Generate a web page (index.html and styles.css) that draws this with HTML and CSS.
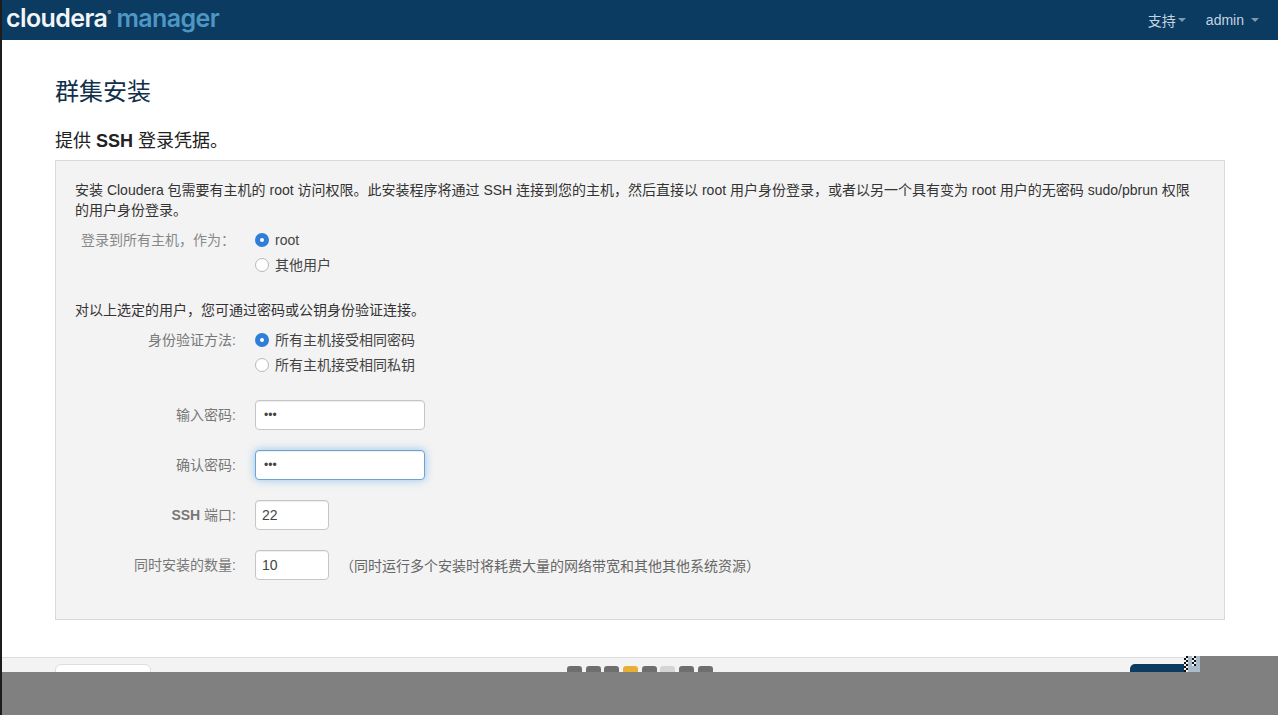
FILE: index.html
```html
<!DOCTYPE html>
<html lang="zh-CN">
<head>
  <meta charset="UTF-8">
  <title>群集安装</title>
  <link rel="stylesheet" href="styles.css">
</head>
<body>
<div class="page">
  <header class="navbar">
    <div class="brand"><span class="brand-a">cloudera</span><sup class="brand-r">®</sup> <span class="brand-b">manager</span></div>
    <nav class="nav-right">
      <span class="nav-item nav-support">支持<i class="caret"></i></span>
      <span class="nav-item nav-admin">admin<i class="caret"></i></span>
    </nav>
  </header>

  <main class="content">
    <h1>群集安装</h1>
    <h2>提供 <b>SSH</b> 登录凭据。</h2>
    <form class="well">
      <p class="intro">安装 Cloudera 包需要有主机的 root 访问权限。此安装程序将通过 SSH 连接到您的主机，然后直接以 root 用户身份登录，或者以另一个具有变为 root 用户的无密码 sudo/pbrun 权限的用户身份登录。</p>

      <div class="row row-radio">
        <label class="lbl lbl-light">登录到所有主机，作为：</label>
        <div class="radios">
          <label class="radio"><input type="radio" name="user" checked>root</label>
          <label class="radio"><input type="radio" name="user">其他用户</label>
        </div>
      </div>

      <p class="note">对以上选定的用户，您可通过密码或公钥身份验证连接。</p>

      <div class="row row-radio">
        <label class="lbl">身份验证方法:</label>
        <div class="radios">
          <label class="radio"><input type="radio" name="auth" checked>所有主机接受相同密码</label>
          <label class="radio"><input type="radio" name="auth">所有主机接受相同私钥</label>
        </div>
      </div>

      <div class="fields">
        <div class="row">
          <label class="lbl">输入密码:</label>
          <input class="input input-wide input-dots" type="password" value="abc">
        </div>
        <div class="row">
          <label class="lbl">确认密码:</label>
          <input class="input input-wide input-dots input-focus" type="password" value="abc">
        </div>
        <div class="row">
          <label class="lbl"><b>SSH</b> 端口:</label>
          <input class="input input-short" type="text" value="22">
        </div>
        <div class="row">
          <label class="lbl">同时安装的数量:</label>
          <input class="input input-short" type="text" value="10">
          <span class="hint">（同时运行多个安装时将耗费大量的网络带宽和其他其他系统资源）</span>
        </div>
      </div>
    </form>
  </main>

  <footer class="footer">
    <span class="btn-back"></span>
    <div class="steps">
      <span class="step"></span>
      <span class="step"></span>
      <span class="step"></span>
      <span class="step step-on"></span>
      <span class="step"></span>
      <span class="step step-off"></span>
      <span class="step"></span>
      <span class="step"></span>
    </div>
    <span class="btn-next"></span>
  </footer>

  <div class="cover"></div>
  <div class="cover-side"></div>
  <div class="checker"></div>
</div>
</body>
</html>
```

FILE: styles.css
```css
*{box-sizing:border-box;}
html,body{margin:0;padding:0;height:100%;overflow:hidden;}
body{background:#fff;color:#333;font-family:"Liberation Sans","Noto Sans CJK SC",sans-serif;font-size:14px;}
.page{position:relative;height:715px;border-left:2px solid #1c1c1c;overflow:hidden;}

.navbar{height:40px;background:#0b3b60;display:flex;justify-content:space-between;align-items:center;}
.brand{font-family:"Inter",sans-serif;font-size:25px;font-weight:600;letter-spacing:-.6px;line-height:40px;margin-left:4px;margin-top:-4px;white-space:nowrap;}
.brand-a{color:#f2f5f7;}
.brand-r{color:#c8d4dc;font-size:6px;font-weight:400;vertical-align:12px;line-height:0;}
.brand-b{color:#4e97c4;}
.nav-right{display:flex;align-items:center;}
.nav-item{color:#c4d4e0;font-size:14px;display:flex;align-items:center;}
.nav-support{margin-right:20px;}
.nav-admin{margin-right:19px;}
.caret{display:inline-block;border-top:4px solid #7e98ac;border-left:4px solid transparent;border-right:4px solid transparent;margin-left:2px;}
.nav-admin .caret{margin-left:7px;}

.content{padding:0 53px;}
h1{margin:0;padding-top:36px;font-size:24px;font-weight:400;line-height:32px;color:#12304a;}
h2{margin:0;padding-top:21px;font-size:18px;font-weight:400;line-height:24px;color:#222;}
.well{margin-top:7px;height:460px;background:#f3f3f3;border:1px solid #d9d9d9;padding:19px 24px 0 19px;}
.intro{margin:0;line-height:20px;color:#333;}
.note{margin:25px 0 0;line-height:20px;color:#333;}

.row{display:flex;align-items:center;}
.row-radio{align-items:flex-start;margin-top:10px;}
.lbl{width:180px;flex:none;text-align:right;color:#777;line-height:20px;padding-right:19px;}
.lbl-light{text-align:left;padding:0 0 0 6px;color:#888;}
.radios{display:flex;flex-direction:column;gap:5px;}
.radio{display:flex;align-items:center;line-height:20px;color:#444;}
.radio input{appearance:none;width:14px;height:14px;margin:0 6px 0 0;border-radius:50%;background:#fff;border:1px solid #b8b8b8;}
.radio input:checked{background:#fff;border:5px solid #2f7ed8;}

.fields{margin-top:25px;display:flex;flex-direction:column;gap:20px;}
.input{height:30px;border:1px solid #c6c6c6;border-radius:4px;background:#fff;padding:0 6px;font-family:inherit;font-size:14px;color:#444;outline:none;box-shadow:inset 0 1px 1px rgba(0,0,0,.07);}
.input-wide{width:170px;}
.input-short{width:74px;}
.input-dots{font-size:12px;padding-left:8px;}
.input-focus{border-color:#6aa3d5;box-shadow:inset 0 1px 1px rgba(0,0,0,.07),0 0 8px rgba(102,175,233,.7);}
.hint{margin-left:11px;color:#666;}

.footer{position:absolute;left:0;right:0;top:657px;height:58px;background:#f3f3f3;border-top:1px solid #dcdcdc;}
.btn-back{position:absolute;left:53px;top:6px;width:96px;height:30px;background:#fff;border:1px solid #ddd;border-radius:6px;}
.steps{position:absolute;left:565px;top:8px;display:flex;gap:3.7px;}
.step{width:15px;height:15px;border-radius:3px;background:#6e6e6e;}
.step-on{background:#e9ae35;}
.step-off{background:#d5d5d5;}
.btn-next{position:absolute;left:1128px;top:6px;width:56px;height:30px;background:#0b3b60;border-radius:5px 0 0 5px;}

.cover{position:absolute;left:-2px;right:0;top:672px;bottom:0;background:#808080;}
.cover-side{position:absolute;left:1198px;right:0;top:656px;height:16px;background:#808080;}
.checker{position:absolute;left:1182px;top:656px;width:16px;height:16px;background:#a9bccb;}
.checker::before,.checker::after{content:"";position:absolute;top:0;height:16px;background:repeating-conic-gradient(#111 0 25%,#f2f2f2 0 50%) 0 0/4px 4px;}
.checker::before{left:0;width:4px;}
.checker::after{left:8px;width:4px;height:10px;}
```
